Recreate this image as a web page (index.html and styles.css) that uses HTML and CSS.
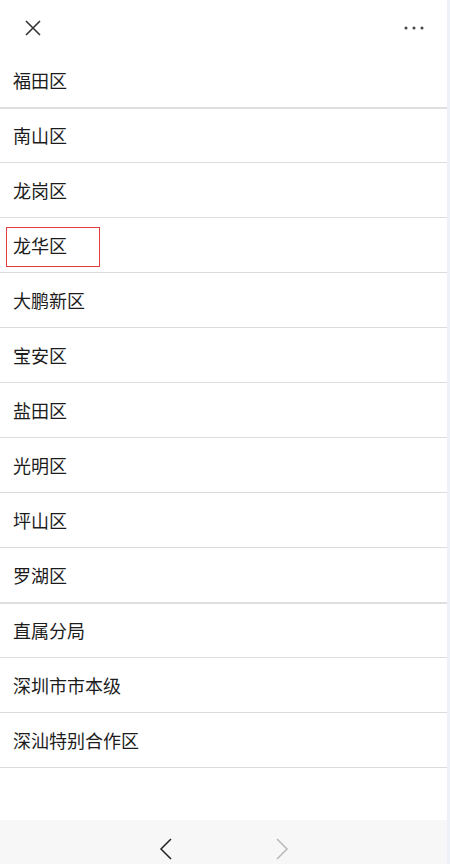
FILE: index.html
```html
<!DOCTYPE html>
<html lang="zh-CN">
	<head>
		<meta charset="utf-8">
		<title>选择区域</title>
		<link rel="stylesheet" href="styles.css">
	</head>
	<body>
	<div class="page">
		<div class="app">
			<div class="topbar">
				<svg class="close" width="18" height="18" viewBox="0 0 18 18">
					<path d="M2 2 L16 16 M16 2 L2 16" stroke="#333" stroke-width="1.6" fill="none"/>
				</svg>
				<svg class="more" width="22" height="6" viewBox="0 0 22 6">
					<circle cx="3" cy="3" r="1.5" fill="#444"/>
					<circle cx="11" cy="3" r="1.5" fill="#444"/>
					<circle cx="19" cy="3" r="1.5" fill="#444"/>
				</svg>
			</div>
			<ul class="list">
				<li class="item thick">福田区</li>
				<li class="item">南山区</li>
				<li class="item">龙岗区</li>
				<li class="item"><span class="mark"></span>龙华区</li>
				<li class="item">大鹏新区</li>
				<li class="item">宝安区</li>
				<li class="item">盐田区</li>
				<li class="item">光明区</li>
				<li class="item">坪山区</li>
				<li class="item thick">罗湖区</li>
				<li class="item">直属分局</li>
				<li class="item">深圳市市本级</li>
				<li class="item">深汕特别合作区</li>
			</ul>
			<div class="navbar">
				<svg width="14" height="24" viewBox="0 0 14 24">
					<path d="M12 2 L2 12 L12 22" stroke="#222" stroke-width="1.5" fill="none"/>
				</svg>
				<svg width="14" height="24" viewBox="0 0 14 24">
					<path d="M2 2 L12 12 L2 22" stroke="#b8b8b8" stroke-width="1.5" fill="none"/>
				</svg>
			</div>
		</div>
		<div class="strip"></div>
	</div>
	</body>
</html>
```

FILE: styles.css
```css
body{
	margin: 0;
	font-family: "Noto Sans CJK SC", "Noto Sans", sans-serif;
}
.page{
	display: flex;
	width: 450px;
	height: 864px;
}
.app{
	flex: 1;
	display: flex;
	flex-direction: column;
	background: #fff;
}
.strip{
	width: 3px;
	background: #eef1f8;
}
.topbar{
	height: 53px;
	display: flex;
	align-items: center;
	justify-content: space-between;
	padding: 0 22px 0 24px;
	box-sizing: border-box;
}
.close{
	margin-top: 2px;
}
.more{
	margin-top: 2px;
}
.list{
	list-style: none;
	margin: 0;
	padding: 0;
	flex: 1;
}
.item{
	position: relative;
	height: 54px;
	line-height: 54px;
	padding-left: 13px;
	font-size: 18px;
	color: #1c1c1c;
	border-bottom: 1px solid #dcdcdc;
}
.item.thick{
	border-bottom: 2px solid #dfdfdf;
}
.thick + .item{
	height: 53px;
	line-height: 53px;
}
.mark{
	position: absolute;
	left: 6px;
	top: 9px;
	width: 92px;
	height: 38px;
	border: 1px solid #e23c3c;
}
.navbar{
	height: 44px;
	background: #f7f7f7;
	display: flex;
	align-items: center;
	justify-content: center;
	gap: 102px;
	padding-top: 14px;
	box-sizing: border-box;
}
```
